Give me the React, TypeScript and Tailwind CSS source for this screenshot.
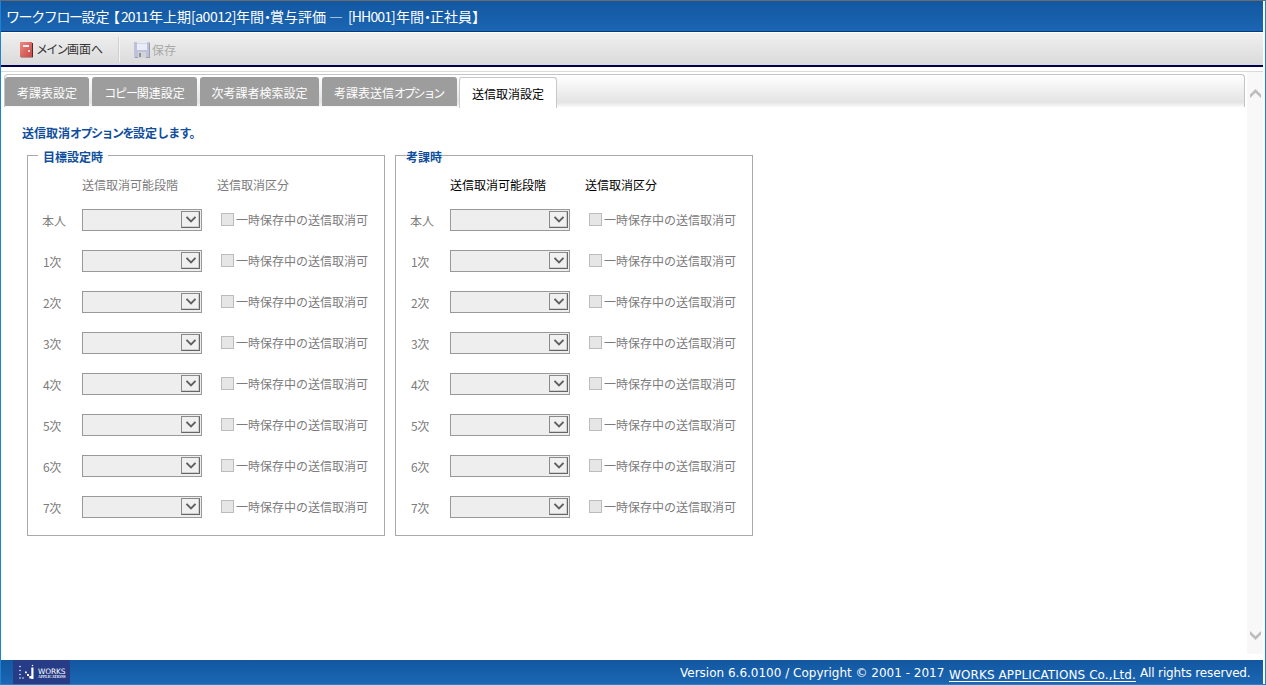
import React from 'react';

const levels = ['本人', '1次', '2次', '3次', '4次', '5次', '6次', '7次'];

function Kana({ children, tight = 'tracking-[-1.8px]' }: { children: React.ReactNode; tight?: string }) {
  return <span className={tight}>{children}</span>;
}

function DoorIcon() {
  return (
    <svg width="14" height="16" viewBox="0 0 14 16" className="block">
      <defs>
        <linearGradient id="door" x1="0" y1="0" x2="1" y2="1">
          <stop offset="0" stopColor="#ee8880" />
          <stop offset="1" stopColor="#cb4644" />
        </linearGradient>
      </defs>
      <path d="M1 15h12v1H1z" fill="#a89a9a" />
      <rect x="0" y="0" width="12" height="15" fill="url(#door)" />
      <path d="M12 1h1v14h-1z" fill="#4f2a2a" />
      <rect x="3" y="3" width="6" height="2" fill="#e8eef8" />
      <rect x="8" y="8" width="2" height="2" fill="#f8dcdc" />
    </svg>
  );
}

function SaveIcon() {
  return (
    <svg width="16" height="16" viewBox="0 0 16 16" className="block">
      <path d="M0 0h15l1 1v15H1l-1-1z" fill="#bfc0da" />
      <path d="M15 1h1v15H1v-1h14z" fill="#9b9cab" />
      <rect x="3" y="0" width="10" height="8" fill="#e8edf7" />
      <rect x="3" y="1" width="10" height="1" fill="#cfd5e6" />
      <rect x="4" y="10" width="8" height="6" fill="#d2d5d8" />
      <rect x="5" y="11" width="2" height="4" fill="#8f929c" />
    </svg>
  );
}

function Chevron({ up = false }: { up?: boolean }) {
  return (
    <svg width="11" height="9" viewBox="0 0 11 9" className="block">
      <path d={up ? 'M0 5.5L5.5 0L11 5.5V9L5.5 3.8L0 9z' : 'M0 3.5L5.5 9L11 3.5V0L5.5 5.2L0 0z'} fill="#bdbdbd" />
    </svg>
  );
}

function SelectBox() {
  return (
    <div className="flex h-[22px] w-[120px] justify-end border border-[#999] bg-[#eee] pt-px pr-px">
      <div className="flex h-[17px] w-[19px] items-center justify-center border border-t-[#8a8a8a] border-r-[#666] border-b-[#666] border-l-[#8a8a8a] bg-[#f0f0f0] shadow-[inset_-1px_-1px_0_#cfcfcf]">
        <svg width="10" height="7" viewBox="0 0 10 7">
          <path d="M0.5 0.8L5 5.3L9.5 0.8" fill="none" stroke="#606060" strokeWidth="1.9" />
        </svg>
      </div>
    </div>
  );
}

function Logo() {
  const dots = [[1, 2], [1, 6], [1, 10], [1, 13.5], [4, 13.5], [13.5, 1]];
  return (
    <div className="ml-3 flex h-full w-[57px] items-center gap-1 bg-[#263c87] pl-[6px]">
      <svg width="15" height="16" viewBox="0 0 15 16" className="shrink-0">
        {dots.map(([x, y], i) => (
          <circle key={i} cx={x} cy={y + 0.5} r="0.75" fill="#fff" />
        ))}
        <path d="M12.3 3.5h2.2V15h-2.2zM6 7.5h1.8v1.8H6zM8 10h2v2H8zM10.3 12h2v2.5h-2z" fill="#fff" />
      </svg>
      <div className="pt-[3px] text-white">
        <div className="font-['DejaVu_Sans'] text-[7.4px] leading-[7px] tracking-[-0.1px]">WORKS</div>
        <div className="w-[28px] font-['Liberation_Serif'] text-[3.7px] leading-[4px] font-bold">APPLICATIONS</div>
      </div>
    </div>
  );
}

function Tab({ width, children }: { width: string; children: React.ReactNode }) {
  return (
    <div className={`${width} h-[29px] rounded-t-[3px] bg-[#9d9d9d] text-center leading-[31px] text-white`}>{children}</div>
  );
}

function Panel({ title, legend, header }: { title: string; legend: string; header: string }) {
  return (
    <section className="h-[381px] w-[358px] border border-[#a9a9a9]">
      <h2 className={`${legend} -mt-[7px] h-4 w-fit bg-white leading-4 font-bold text-[#104e9b]`}>{title}</h2>
      <div className={`${header} mt-[12px] flex h-4 pl-[54px] leading-4`}>
        <div className="w-[135px]">送信取消可能段階</div>
        <div>送信取消区分</div>
      </div>
      <div className="mt-[16px] flex flex-col gap-[19px] pl-[15px] text-[#7c7c7c]">
        {levels.map((level, i) => (
          <div key={level} className="flex h-[22px] items-center">
            <div className="w-[39px] shrink-0 pt-px leading-4">
              <div className={i === 0 ? 'ml-[-1px]' : 'tracking-[-0.5px]'}>{level}</div>
            </div>
            <SelectBox />
            <div className="mb-px ml-[19px] size-[13px] border border-[#bcbcbc] bg-[#e6e6e6]" />
            <div className="mb-px ml-[2px] leading-4">一時保存中の送信取消可</div>
          </div>
        ))}
      </div>
    </section>
  );
}

export default function App() {
  return (
    <div className="flex h-[685px] w-[1266px] flex-col overflow-hidden border-t border-r border-b border-l border-t-[#6b6b6b] border-r-[#1883d7] border-b-[#1883d7] border-l-[#1883d7] bg-white pr-[2px] font-['Noto_Sans_CJK_JP','Noto_Sans',sans-serif] text-[12px] whitespace-nowrap">
      <header className="flex h-[31px] shrink-0 items-center border-b border-[#023c7d] bg-linear-to-b from-[#1257a0] to-[#1c66b3] pl-[5px] text-[14px] text-white">
        <div className="w-[107px]"><Kana tight="tracking-[-1.4px]">ワークフロー</Kana>設定</div>
        <div className="w-[8px] [font-feature-settings:'halt']">【</div>
        <div className="w-[28px] tracking-[-0.9px]">2011</div>
        <div className="w-[42px]">年上期</div>
        <div className="w-[45px] tracking-[-0.5px]">[a0012]</div>
        <div className="w-[34px] [font-feature-settings:'halt']">年間・</div>
        <div className="w-[59px]">賞与評価</div>
        <div className="w-[19px]">―</div>
        <div className="w-[48px] tracking-[-0.9px]">[HH001]</div>
        <div className="w-[34px] [font-feature-settings:'halt']">年間・</div>
        <div className="[font-feature-settings:'halt']">正社員】</div>
      </header>
      <div className="mt-px flex h-[34px] shrink-0 items-center border-b-2 border-[#000050] bg-linear-to-b from-[#f0f0f0] to-[#dadada] pl-[19px]">
        <div className="pt-[2px]"><DoorIcon /></div>
        <div className="ml-[2px] w-[69px] text-[#333]"><Kana tight="tracking-[-1.7px]">メイン</Kana>画面へ</div>
        <div className="ml-[13px] h-[25px] w-[2px] border-l border-[#d0d0d0] bg-[#f4f4f4]" />
        <div className="ml-[14px] pt-[2px]"><SaveIcon /></div>
        <div className="ml-[2px] pt-px text-[#a8a8a8]">保存</div>
      </div>
      <div className="mt-1 flex h-[583px] shrink-0 border-t border-[#d9d9d9]">
        <main className="min-w-0 flex-1 pt-[2px] pl-[3px]">
          <nav className="flex h-[33px] w-[1241px] gap-[3px] rounded-tl-[4px] rounded-tr-[4px] border-t border-r border-l border-[#c4c4c4] bg-linear-to-b from-white via-[#e4e4e4] via-85% to-[#fafafa] pt-[2px]">
            <Tab width="w-[84px]">考課表設定</Tab>
            <Tab width="w-[105px]"><Kana tight="tracking-[-1.2px]">コピー</Kana>関連設定</Tab>
            <Tab width="w-[119px]">次考課者検索設定</Tab>
            <Tab width="w-[135px]"><span className="mr-[2px]">考課表送信<Kana tight="tracking-[-2.2px]">オプション</Kana></span></Tab>
            <div className="ml-[-1px] h-[31px] w-[98px] rounded-t-[3px] border-t border-r border-l border-[#c8c8c8] bg-white text-center leading-[31px] text-black">送信取消設定</div>
          </nav>
          <h1 className="mt-[18px] ml-[18px] h-4 leading-4 font-bold text-[#104e9b]">送信取消<Kana tight="tracking-[-1.5px]">オプションを</Kana>設定<Kana tight="tracking-[-0.8px]">します。</Kana></h1>
          <div className="mt-[14px] ml-[23px] flex gap-[10px]">
            <Panel title="目標設定時" legend="ml-[10px] px-[5px]" header="text-[#7c7c7c]" />
            <Panel title="考課時" legend="ml-[10px] px-0" header="text-black" />
          </div>
        </main>
        <aside className="flex w-4 flex-col items-center justify-between bg-[#f8f8f8] pt-[17px] pb-[14px]">
          <Chevron up />
          <Chevron />
        </aside>
      </div>
      <footer className="mt-[6px] flex h-[24px] shrink-0 items-center justify-between bg-linear-to-b from-[#1257a0] to-[#1c66b3] pr-[13px] font-['DejaVu_Sans',sans-serif] text-[12px] text-white">
        <Logo />
        <div className="flex items-center pt-px">
          <span className="w-[269px]">Version 6.6.0100 / Copyright © 2001 - 2017</span>
          <a className="mt-[4px] w-[187px] border-b border-white pt-px leading-[12px] tracking-[0.1px]">WORKS APPLICATIONS Co.,Ltd.</a>
          <span className="ml-1 w-[110px] tracking-[-0.15px]">All rights reserved.</span>
        </div>
      </footer>
    </div>
  );
}
